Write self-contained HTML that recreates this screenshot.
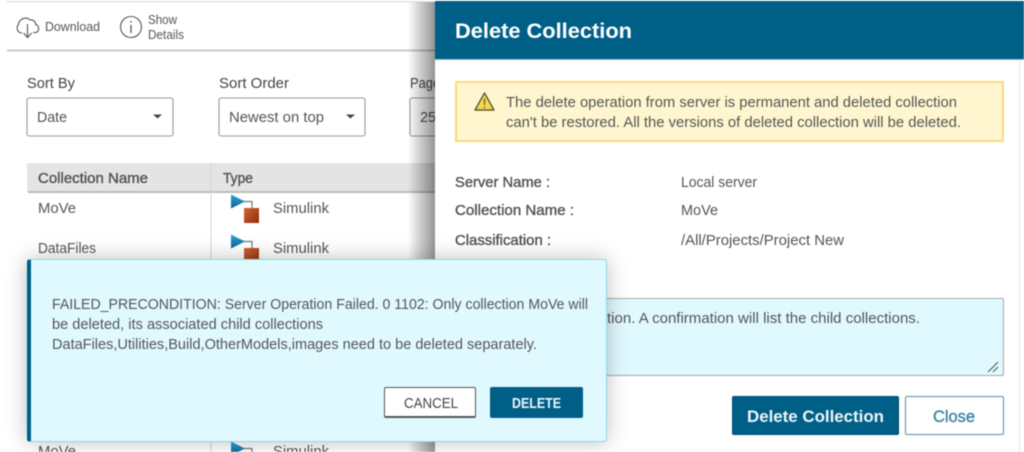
<!DOCTYPE html>
<html><head><meta charset="utf-8"><style>
html,body{margin:0;padding:0;width:1024px;height:452px;overflow:hidden;background:#fff}
#w{position:absolute;left:0;top:0;width:1024px;height:452px;overflow:hidden;filter:blur(.45px)}
svg{position:absolute;left:0;top:0}
svg text{font-family:"Liberation Sans",sans-serif;fill:#555;font-size:15px}
.s{stroke:#4a4a4a;stroke-width:.35}
.d{position:absolute;box-sizing:border-box}
</style></head><body><div id="w">
<svg width="1024" height="452">
<rect x="6" y="1" width="430" height="1.500" fill="#e6e6e6"/>
<rect x="7" y="49.500" width="430" height="2" fill="#c9c9c9"/>
<g fill="none" stroke="#555" stroke-width="1.100">
<path d="M22 33H21C17 32 16 27 18.500 24.500C19 19 26 16 30 20C33 19 36 22 35.500 24.500C39 25 40 31 36 32.500H33"/>
<path d="M27.500 24V37M23.500 33L27.500 37.500L31.500 33"/>
<circle cx="131" cy="27" r="10.500"/>
<path d="M131 25V33M131 21V22.500" stroke-width="1.300"/>
</g>
<text x="45" y="31" style="font-size:13px" textLength="55" lengthAdjust="spacingAndGlyphs">Download</text>
<text x="148" y="24" style="font-size:13px" textLength="29" lengthAdjust="spacingAndGlyphs">Show</text>
<text x="148" y="39" style="font-size:13px" textLength="36" lengthAdjust="spacingAndGlyphs">Details</text>
<text x="27" y="88" textLength="48" lengthAdjust="spacingAndGlyphs" style="fill:#444">Sort By</text>
<text x="219" y="88" textLength="70" lengthAdjust="spacingAndGlyphs" style="fill:#444">Sort Order</text>
<text x="410" y="88" textLength="30" lengthAdjust="spacingAndGlyphs" style="fill:#444">Page</text>
<rect x="27" y="98" width="146" height="38" rx="2" fill="#fff" stroke="#999" stroke-width="1.100"/>
<rect x="219" y="98" width="146" height="38" rx="2" fill="#fff" stroke="#999" stroke-width="1.100"/>
<rect x="410" y="98" width="146" height="38" rx="2" fill="#fff" stroke="#999" stroke-width="1.100"/>
<text x="37" y="122" textLength="30" lengthAdjust="spacingAndGlyphs">Date</text>
<text x="229" y="122" textLength="95" lengthAdjust="spacingAndGlyphs">Newest on top</text>
<text x="420" y="122" textLength="16" lengthAdjust="spacingAndGlyphs">25</text>
<path d="M153 114.500H162L157.500 118.500Z M346 114.500H355L350.500 118.500Z" fill="#444"/>
<rect x="27" y="163" width="420" height="29" fill="#e4e4e4"/>
<rect x="28" y="191" width="420" height="2" fill="#bdbdbd"/>
<rect x="210.500" y="163" width="1" height="290" fill="#d4d4d4"/>
<text x="38" y="183" class="s" textLength="110" lengthAdjust="spacingAndGlyphs">Collection Name</text>
<text x="223" y="183" class="s" textLength="30" lengthAdjust="spacingAndGlyphs">Type</text>
<text x="38" y="213" textLength="38" lengthAdjust="spacingAndGlyphs">MoVe</text>
<text x="273" y="213" textLength="56" lengthAdjust="spacingAndGlyphs">Simulink</text>
<text x="38" y="253" textLength="58" lengthAdjust="spacingAndGlyphs">DataFiles</text>
<text x="273" y="253" textLength="56" lengthAdjust="spacingAndGlyphs">Simulink</text>
<text x="38" y="456" textLength="38" lengthAdjust="spacingAndGlyphs">MoVe</text>
<text x="273" y="456" textLength="56" lengthAdjust="spacingAndGlyphs">Simulink</text>
<defs>
<linearGradient id="sq" x1="0" x2="1" y1="0" y2="1"><stop offset="0" stop-color="#d2682f"/><stop offset="1" stop-color="#8c2c10"/></linearGradient>
<linearGradient id="tr" x1="0" x2="0" y1="0" y2="1"><stop offset="0" stop-color="#2fa8dc"/><stop offset="1" stop-color="#075f94"/></linearGradient>
<g id="ic">
<path d="M243 201.500H252V209" fill="none" stroke="#777" stroke-width="1.200"/>
<path d="M231 194.500L245 201.500L231 208.500Z" fill="url(#tr)"/>
<rect x="244" y="208" width="15" height="15" fill="url(#sq)"/>
</g>
<linearGradient id="g" x1="0" x2="1" y1="0" y2="0"><stop offset="0" stop-color="#000" stop-opacity="0"/><stop offset="1" stop-color="#000" stop-opacity=".42"/></linearGradient>
</defs>
<use href="#ic"/>
<use href="#ic" y="40"/>
<use href="#ic" y="247"/>
<rect x="408" y="2" width="27" height="450" fill="url(#g)"/>
</svg>

<div class="d" style="left:435px;top:1px;width:589px;height:451px;background:#fff">
<div class="d" style="left:0;top:0;width:589px;height:59px;background:#005f87;border-bottom:1px solid #9db8c6"></div>
<div class="d" style="right:0;top:60px;width:5px;height:391px;background:#fff;border-left:1px solid #e3e3e3"></div>
<div class="d" style="left:20px;top:80px;width:549px;height:61px;background:#fff6cf;border:2px solid #fcd97a"></div>
<div class="d" style="left:20px;top:297px;width:549px;height:78px;background:#e0f9ff;border:1px solid #a9a9a9;border-radius:2px"></div>
<div class="d" style="left:297px;top:395px;width:167px;height:39px;background:#005f87;border:1px solid #004a6a;border-radius:2px"></div>
<div class="d" style="left:470px;top:395px;width:99px;height:39px;background:#fff;border:1.500px solid #4f8fae;border-radius:2px"></div>
</div>

<svg width="1024" height="452">
<text x="455" y="38" textLength="177" lengthAdjust="spacingAndGlyphs" style="fill:#fff;font-size:21px;font-weight:bold">Delete Collection</text>
<path d="M484.500 93L494 110H475Z" fill="#f7d94e" stroke="#5e5a3a" stroke-width="1.400" stroke-linejoin="round"/>
<path d="M484.500 98.500V105M484.500 106.500V108" stroke="#5e5a3a" stroke-width="1.300"/>
<text x="506" y="107" textLength="451" lengthAdjust="spacingAndGlyphs">The delete operation from server is permanent and deleted collection</text>
<text x="506" y="127" textLength="455" lengthAdjust="spacingAndGlyphs">can't be restored. All the versions of deleted collection will be deleted.</text>
<text x="455" y="187" class="s" textLength="95" lengthAdjust="spacingAndGlyphs">Server Name :</text>
<text x="455" y="215" class="s" textLength="119" lengthAdjust="spacingAndGlyphs">Collection Name :</text>
<text x="455" y="245" class="s" textLength="96" lengthAdjust="spacingAndGlyphs">Classification :</text>
<text x="681" y="187" textLength="76" lengthAdjust="spacingAndGlyphs">Local server</text>
<text x="681" y="215" textLength="37" lengthAdjust="spacingAndGlyphs">MoVe</text>
<text x="681" y="245" textLength="163" lengthAdjust="spacingAndGlyphs">/All/Projects/Project New</text>
<text x="607" y="323" textLength="313" lengthAdjust="spacingAndGlyphs">tion. A confirmation will list the child collections.</text>
<path d="M988 372L998 362M993 372L998 367" stroke="#555" stroke-width="1.100"/>
<text x="747" y="422" textLength="137" lengthAdjust="spacingAndGlyphs" style="fill:#eef6fa;font-size:17px;font-weight:bold">Delete Collection</text>
<text x="933" y="422" textLength="42" lengthAdjust="spacingAndGlyphs" style="fill:#3f85a6;font-size:17px;stroke:#3f85a6;stroke-width:.4">Close</text>
</svg>

<div class="d" style="left:27px;top:259px;width:580px;height:183px;background:#e0f9ff;border:1px solid #8adcea;border-left:4px solid #005f87;border-radius:3px;box-shadow:0 0 22px rgba(0,0,0,.26)"></div>
<div class="d" style="left:384px;top:387px;width:92px;height:31px;background:#fff;border:1px solid #555;border-bottom-width:2px;border-radius:2px"></div>
<div class="d" style="left:490px;top:387px;width:93px;height:31px;background:#005f87;border-radius:2px"></div>
<svg width="1024" height="452">
<text x="52" y="309" textLength="536" lengthAdjust="spacingAndGlyphs">FAILED_PRECONDITION: Server Operation Failed. 0 1102: Only collection MoVe will</text>
<text x="52" y="329" textLength="271" lengthAdjust="spacingAndGlyphs">be deleted, its associated child collections</text>
<text x="52" y="349" textLength="485" lengthAdjust="spacingAndGlyphs">DataFiles,Utilities,Build,OtherModels,images need to be deleted separately.</text>
<text x="404" y="408" textLength="54" lengthAdjust="spacingAndGlyphs" style="fill:#444">CANCEL</text>
<text x="512" y="408" textLength="49" lengthAdjust="spacingAndGlyphs" style="fill:#eef6fa;font-weight:bold">DELETE</text>
</svg>
</div></body></html>
